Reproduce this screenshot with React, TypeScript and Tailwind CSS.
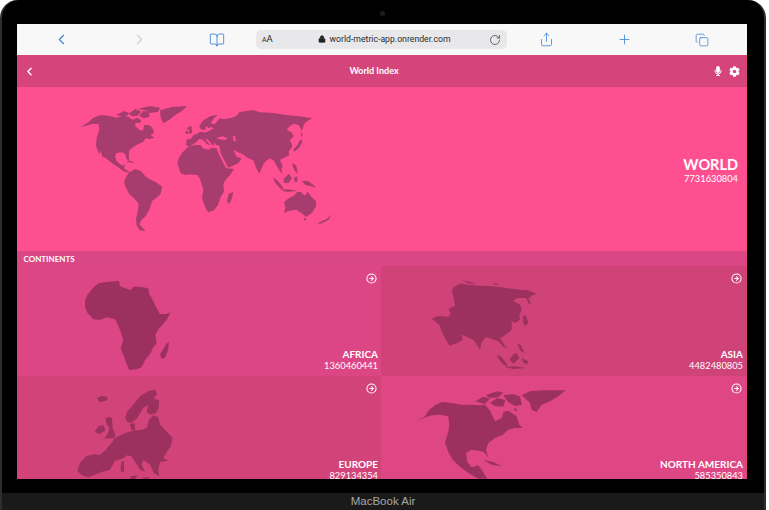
import { BookOpen, ChevronLeft, ChevronRight, CircleArrowRight, Copy, Lock, Plus, RotateCw, Share } from "lucide-react";
import { FaCog, FaMicrophone } from "react-icons/fa";

const worldShapes = [
  // north america
  "M60 97L72 90 85 82 100 68 122 60 145 62 170 68 190 62 205 66 218 74 232 68 244 76 240 84 226 84 226 94 240 106 250 106 252 90 266 90 275 96 283 112 272 120 283 128 268 132 258 130 248 142 234 148 220 156 208 166 206 180 208 200 200 192 196 178 186 172 170 174 165 184 170 198 180 208 190 212 196 206 192 220 204 228 212 234 198 232 186 226 170 214 152 202 138 190 128 186 120 166 118 180 108 152 110 128 118 104 116 88 100 86Z",
  "M168 60L192 48 208 54 200 62 184 64Z",
  "M206 56L226 42 244 50 232 62 216 64Z",
  "M238 62L250 48 268 50 268 66 250 70Z",
  "M232 42L270 33 300 38 294 50 272 54 256 46Z",
  "M300 46L335 36 382 33 366 48 346 60 326 76 310 85 302 68Z",
  "M196 198L214 198 226 205 208 202Z",
  // south america
  "M192 262L198 246 206 234 225 222 243 228 256 244 268 252 288 262 307 275 302 296 290 308 276 318 270 340 258 362 244 376 238 388 257 408 240 406 230 392 228 372 234 346 236 326 222 310 208 298 198 278Z",
  // africa
  "M352 205L356 190 368 172 384 156 404 150 422 150 428 160 446 164 454 158 470 160 476 176 488 200 498 220 522 222 512 238 496 256 490 268 492 290 482 306 474 330 462 346 444 352 434 334 426 308 430 284 420 252 412 240 392 238 376 240 362 234Z",
  "M506 296L520 291 514 316 506 327 501 318Z",
  // eurasia
  "M378 150L380 134 395 130 400 120 412 116 420 110 428 112 440 112 452 105 462 100 452 96 446 100 438 92 436 104 428 105 420 100 418 92 430 76 452 63 474 59 462 70 452 84 462 88 470 82 478 70 492 72 510 70 528 64 538 52 560 48 580 45 600 52 640 54 680 60 720 64 757 70 742 78 732 88 726 108 716 90 702 86 690 92 680 104 694 112 702 124 690 134 697 154 686 170 688 180 670 190 660 194 668 214 664 222 668 240 658 226 650 212 642 198 630 190 618 198 610 208 598 236 588 218 580 196 565 190 548 178 535 172 520 165 530 185 545 190 535 205 505 218 495 200 482 175 478 152 468 150 464 140 462 152 455 148 446 136 434 130 452 152 440 146 428 134 418 132 408 142 396 150 386 155ZM470 128L488 124 503 130 495 135 478 133ZM519 122L525 122 528 140 520 137Z",
  "M384 100L394 96 397 114 384 117 388 108Z",
  "M376 110L384 106 384 116 376 116Z",
  "M378 100L392 93 396 97 384 103Z",
  "M712 150L722 132 728 140 716 160 702 170 700 164Z",
  "M722 112L728 118 724 128Z",
  // asia pacific islands
  "M638 248L650 254 664 270 672 284 660 280 648 266Z",
  "M670 252L686 236 696 248 686 264 672 264Z",
  "M660 284L686 283 712 288 680 291Z",
  "M696 205L708 210 714 236 704 228 700 218Z",
  "M702 248L712 244 712 262 704 260Z",
  "M725 258L745 258 770 278 752 274 736 270Z",
  // australia
  "M672 322L686 310 702 302 712 290 724 292 734 302 744 290 752 304 768 318 768 334 756 354 738 365 724 354 708 344 686 348 672 354 676 338Z",
  "M730 370L740 370 735 378Z",
  "M772 385L800 372 815 358 805 375 782 386Z",
];

const africaShapes = [
  "M255 182L262 165 278 145 295 130 325 125 357 123 360 138 372 143 392 150 400 140 420 140 445 145 447 160 458 180 470 205 480 222 498 222 511 217 503 235 490 252 475 268 466 285 470 310 458 325 452 340 435 360 425 382 410 388 388 390 380 372 372 350 362 325 370 300 360 270 352 250 345 238 320 232 300 240 280 238 262 218 255 200Z",
  "M500 310L507 307 504 330 496 352 485 357 480 342 488 330Z",
];

const asiaShapes = [
  "M155 178L170 170 190 170 205 172 212 160 205 148 225 138 222 120 215 92 222 82 240 72 265 75 300 78 340 80 380 85 420 90 445 92 470 102 455 108 445 118 455 135 445 128 438 115 410 115 400 125 420 135 425 150 418 165 420 180 405 190 395 185 395 210 378 225 360 235 375 258 385 265 370 262 355 245 340 240 318 232 305 248 300 270 290 255 280 240 262 232 245 225 248 240 232 250 208 258 195 235 185 215 178 195 165 185Z",
  "M245 62L268 66 290 72 268 72Z",
  "M340 70L360 74 345 76Z",
  "M428 172L436 165 446 190 434 200 430 190Z",
  "M442 118L448 122 446 134Z",
  "M350 285L362 290 376 306 385 322 370 315 358 300Z",
  "M388 300L400 284 410 280 418 295 400 312Z",
  "M412 250L424 258 434 280 420 272 416 262Z",
  "M375 322L400 320 440 325 400 328Z",
  "M425 295L445 305 440 315 430 308Z",
];

const europeShapes = [
  "M232 288L240 265 258 245 285 238 298 242 318 225 338 200 345 190 365 180 385 172 400 168 425 165 440 160 447 135 460 122 475 128 480 150 495 165 518 190 512 215 500 232 490 250 505 258 480 262 475 285 478 305 462 295 450 270 430 255 425 270 435 292 420 285 405 262 395 245 380 242 372 250 345 258 330 285 305 292 280 302 265 308 245 302Z",
  "M375 130L382 110 400 90 420 65 445 50 465 45 472 58 460 70 478 78 476 100 468 116 450 120 440 112 444 90 430 100 412 130 395 145 382 142Z",
  "M290 70L304 64 320 66 323 76 300 83Z",
  "M316 130L328 126 336 130 338 160 346 180 344 190 312 192 324 176 328 160 320 148Z",
  "M284 172L296 154 312 152 316 168 298 178Z",
  "M390 148L404 146 406 168 394 165Z",
  "M366 260L372 260 372 275 372 292 362 290 362 274Z",
  "M390 305L412 302 405 315 392 313Z",
  "M425 310L450 307 440 315Z",
];

const northAmericaShapes = [
  "M110 138L135 125 145 108 165 92 185 82 215 85 245 90 275 90 300 92 315 90 330 108 345 140 365 130 370 112 385 108 410 125 418 150 428 160 405 160 385 165 368 180 345 190 325 205 318 225 325 250 312 232 298 228 275 225 258 235 262 262 275 278 295 272 305 285 322 312 295 312 265 295 238 275 218 255 205 232 195 205 205 170 208 150 205 125 180 120 155 122 130 130Z",
  "M286 80L310 66 330 72 314 88Z",
  "M318 62L350 50 370 54 354 68 328 70Z",
  "M330 84L352 70 376 76 370 96 344 94Z",
  "M370 62L400 58 420 66 426 90 405 94 384 82Z",
  "M425 62L450 50 490 47 557 47 535 65 510 80 485 90 470 112 455 105 450 85 440 75Z",
  "M310 255L340 262 365 275 335 270Z",
  "M400 100L412 104 408 112Z",
];

function Landmass({ shapes, viewBox, className, fill }: { shapes: string[]; viewBox: string; className: string; fill: string }) {
  return (
    <svg viewBox={viewBox} className={className}>
      {shapes.map((d) => (
        <path key={d} d={d} fill={fill} fillRule="evenodd" />
      ))}
    </svg>
  );
}

const continents = [
  {
    name: "AFRICA",
    population: "1360460441",
    bg: "bg-[#dc4684]",
    pad: "pr-[3px]",
    shapes: africaShapes,
    viewBox: "240 120 285 280",
    map: "w-[95px] h-[93.33px] ml-[63px] mt-[14px] shrink-0",
  },
  {
    name: "ASIA",
    population: "4482480805",
    bg: "bg-[#cf4379]",
    pad: "pr-[4px]",
    shapes: asiaShapes,
    viewBox: "150 55 345 280",
    map: "w-[115px] h-[93.33px] ml-[49px] mt-[12px] shrink-0",
  },
  {
    name: "EUROPE",
    population: "829134354",
    bg: "bg-[#d24379]",
    pad: "pr-[3px]",
    shapes: europeShapes,
    viewBox: "225 40 300 300",
    map: "w-[100px] h-[100px] ml-[58px] mt-[12px] shrink-0",
  },
  {
    name: "NORTH AMERICA",
    population: "585350843",
    bg: "bg-[#de4684]",
    pad: "pr-[4px]",
    shapes: northAmericaShapes,
    viewBox: "105 40 455 300",
    map: "w-[151.67px] h-[100px] ml-[34px] mt-[12px] shrink-0",
  },
];

const safariIcon = "w-[78px] flex justify-center text-[#3b82d6]";

export default function App() {
  return (
    <div className="w-[769px] h-[510px] bg-white overflow-hidden font-['Lato',sans-serif]">
      <div className="relative w-[766px] h-[510px] bg-black rounded-t-[18px] border-x-2 border-[#2e2e2e] flex flex-col">
        <div className="absolute top-[11px] left-[378px] w-[5px] h-[5px] rounded-full bg-[#1c1c1c]" />

        <div className="w-[730px] h-[455px] mt-[24px] ml-[15px] flex flex-col overflow-hidden shrink-0 text-white">
          <div className="h-[31px] bg-[#f8f8f8] flex items-center pl-[5px] shrink-0">
            <div className={safariIcon}>
              <ChevronLeft size={17} strokeWidth={1.5} />
            </div>
            <div className="w-[78px] flex justify-center text-[#cfcfcf]">
              <ChevronRight size={17} strokeWidth={1.5} />
            </div>
            <div className={safariIcon}>
              <BookOpen size={16} strokeWidth={1.3} />
            </div>
            <div className="w-[251px] h-[19px] bg-[#e8e8ea] rounded-[5px] flex items-center justify-between px-[6px] text-[#2b2b2b] font-['Roboto',sans-serif]">
              <span className="text-[9.5px] w-[46px]">
                <span className="text-[7px]">A</span>A
              </span>
              <span className="flex items-center gap-[3px] text-[8.7px]">
                <Lock size={8} fill="#222" strokeWidth={2} />
                world-metric-app.onrender.com
              </span>
              <span className="w-[40px] flex justify-end">
                <RotateCw size={12} strokeWidth={1.3} />
              </span>
            </div>
            <div className={safariIcon}>
              <Share size={15} strokeWidth={1.3} />
            </div>
            <div className={safariIcon}>
              <Plus size={15} strokeWidth={1.3} />
            </div>
            <div className={safariIcon}>
              <Copy size={14} strokeWidth={1.3} />
            </div>
          </div>

          <div className="h-[32px] bg-[#d6447c] flex items-center justify-between pl-[6px] pr-[7px] shrink-0">
            <div className="w-[40px]">
              <ChevronLeft size={13} strokeWidth={2.5} />
            </div>
            <span className="text-[9px] font-bold">World Index</span>
            <div className="w-[55px] flex items-center justify-end gap-[6px]">
              <FaMicrophone size={10} />
              <FaCog size={11} />
            </div>
          </div>

          <div className="h-[164px] bg-[#fe5090] flex justify-between shrink-0">
            <Landmass
              shapes={worldShapes}
              viewBox="0 0 870 435"
              fill="#a73c6f"
              className="w-[290px] h-[145px] ml-[43px] mt-[8px] shrink-0"
            />
            <div className="flex flex-col items-end pt-[69px] pr-[9px]">
              <span className="text-[14.5px] leading-[17px] font-bold">WORLD</span>
              <span className="text-[9.3px] leading-[11px]">7731630804</span>
            </div>
          </div>

          <div className="h-[15px] bg-[#db4684] flex items-center pl-[6.5px] text-[8px] font-bold shrink-0">CONTINENTS</div>

          <div className="grid grid-cols-[364px_366px]">
            {continents.map((c) => (
              <div key={c.name} className={`${c.bg} h-[110px] flex justify-between items-start`}>
                <Landmass shapes={c.shapes} viewBox={c.viewBox} fill="#9c3160" className={c.map} />
                <div className={`${c.pad} h-full flex flex-col items-end justify-between pt-[7px] pb-[4px]`}>
                  <CircleArrowRight size={11} strokeWidth={2.2} className="mr-[1px]" />
                  <div className="flex flex-col items-end">
                    <span className="text-[10px] leading-[12px] font-bold">{c.name}</span>
                    <span className="text-[9.3px] leading-[12px]">{c.population}</span>
                  </div>
                </div>
              </div>
            ))}
          </div>
        </div>

        <div className="mt-[14px] flex-1 bg-[#1a1a1a] flex items-center justify-center text-[11.5px] text-[#a8a8a8] font-['Liberation_Sans',sans-serif]">
          MacBook Air
        </div>
      </div>
    </div>
  );
}
